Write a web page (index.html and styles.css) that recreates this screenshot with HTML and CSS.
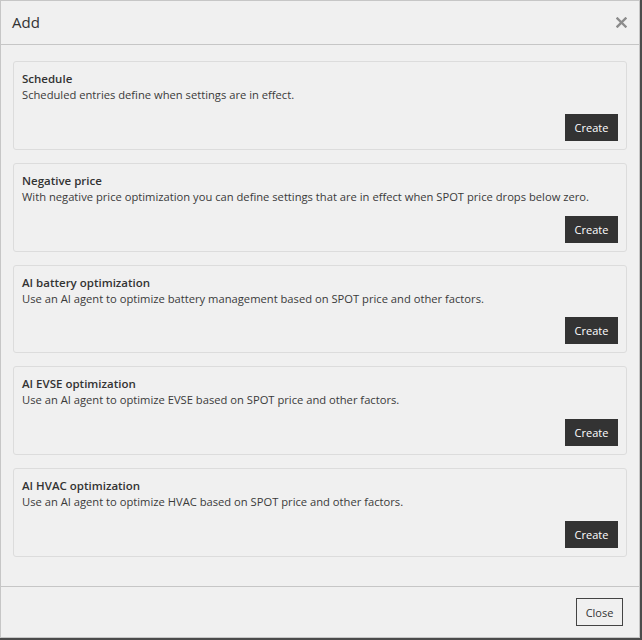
FILE: index.html
```html
<!DOCTYPE html>
<html lang="en">
<head>
    <meta charset="UTF-8">
    <meta name="viewport" content="width=device-width, initial-scale=1.0">
    <title>Add</title>
    <link rel="stylesheet" href="styles.css">
</head>
<body>

    <div class="dialog">
        <div class="dialog-header">
            <h2>Add</h2>
            <button type="button" class="btn-x" aria-label="Close">
                <svg width="11" height="11" viewBox="0 0 11 11">
                    <path d="M1.5 1.5 L9.5 9.5 M9.5 1.5 L1.5 9.5" stroke="#8c8c8c" stroke-width="2.4" stroke-linecap="square"/>
                </svg>
            </button>
        </div>

        <div class="dialog-body">
            <div class="card">
                <div class="card-title">Schedule</div>
                <div class="card-text">Scheduled entries define when settings are in effect.</div>
                <div class="card-actions"><button type="button" class="btn btn-create">Create</button></div>
            </div>
            <div class="card">
                <div class="card-title">Negative price</div>
                <div class="card-text">With negative price optimization you can define settings that are in effect when SPOT price drops below zero.</div>
                <div class="card-actions"><button type="button" class="btn btn-create">Create</button></div>
            </div>
            <div class="card">
                <div class="card-title">AI battery optimization</div>
                <div class="card-text">Use an AI agent to optimize battery management based on SPOT price and other factors.</div>
                <div class="card-actions"><button type="button" class="btn btn-create">Create</button></div>
            </div>
            <div class="card">
                <div class="card-title">AI EVSE optimization</div>
                <div class="card-text">Use an AI agent to optimize EVSE based on SPOT price and other factors.</div>
                <div class="card-actions"><button type="button" class="btn btn-create">Create</button></div>
            </div>
            <div class="card">
                <div class="card-title">AI HVAC optimization</div>
                <div class="card-text">Use an AI agent to optimize HVAC based on SPOT price and other factors.</div>
                <div class="card-actions"><button type="button" class="btn btn-create">Create</button></div>
            </div>
        </div>

        <div class="dialog-footer">
            <button type="button" class="btn btn-close">Close</button>
        </div>
    </div>

</body>
</html>
```

FILE: styles.css
```css
body {
    margin: 0;
    background: #4b4b4b;
    font-family: "Open Sans", Arial, sans-serif;
    color: #333;
}
.dialog {
    width: 638px;
    height: 636px;
    border: 1px solid #c6c6c6;
    background: #f0f0f0;
    display: flex;
    flex-direction: column;
}
.dialog-header {
    height: 43px;
    border-bottom: 1px solid #c6c6c6;
    display: flex;
    align-items: center;
    justify-content: space-between;
    padding: 0 12px 0 11px;
}
h2 {
    margin: 0 0 2px;
    font-size: 15px;
    font-weight: normal;
    color: #333;
}
.btn-x {
    background: none;
    border: none;
    padding: 0;
    width: 11px;
    height: 11px;
    display: flex;
    cursor: pointer;
}
.dialog-body {
    flex: 1;
    padding: 16px 12px;
    display: flex;
    flex-direction: column;
    gap: 13px;
}
.card {
    height: 70.75px;
    border: 1px solid #dcdcdc;
    border-radius: 3px;
    padding: 8px;
    display: flex;
    flex-direction: column;
}
.card-title {
    font-size: 11.5px;
    font-weight: 600;
    line-height: 16px;
    margin-top: 1px;
}
.card-text {
    font-size: 11.2px;
    line-height: 16px;
    color: #3a3a3a;
}
.card-actions {
    margin-top: auto;
    display: flex;
    justify-content: flex-end;
}
.btn {
    font-family: "Open Sans", Arial, sans-serif;
    font-size: 11px;
    cursor: pointer;
}
.btn-create {
    width: 53px;
    height: 27px;
    background: #333;
    color: #fff;
    border: none;
    padding: 0;
}
.dialog-footer {
    height: 50px;
    border-top: 1px solid #c6c6c6;
    display: flex;
    align-items: center;
    justify-content: flex-end;
    padding: 0 16px;
}
.btn-close {
    width: 47px;
    height: 28px;
    background: #f0f0f0;
    color: #333;
    border: 1px solid #444;
    padding: 0;
}
```
